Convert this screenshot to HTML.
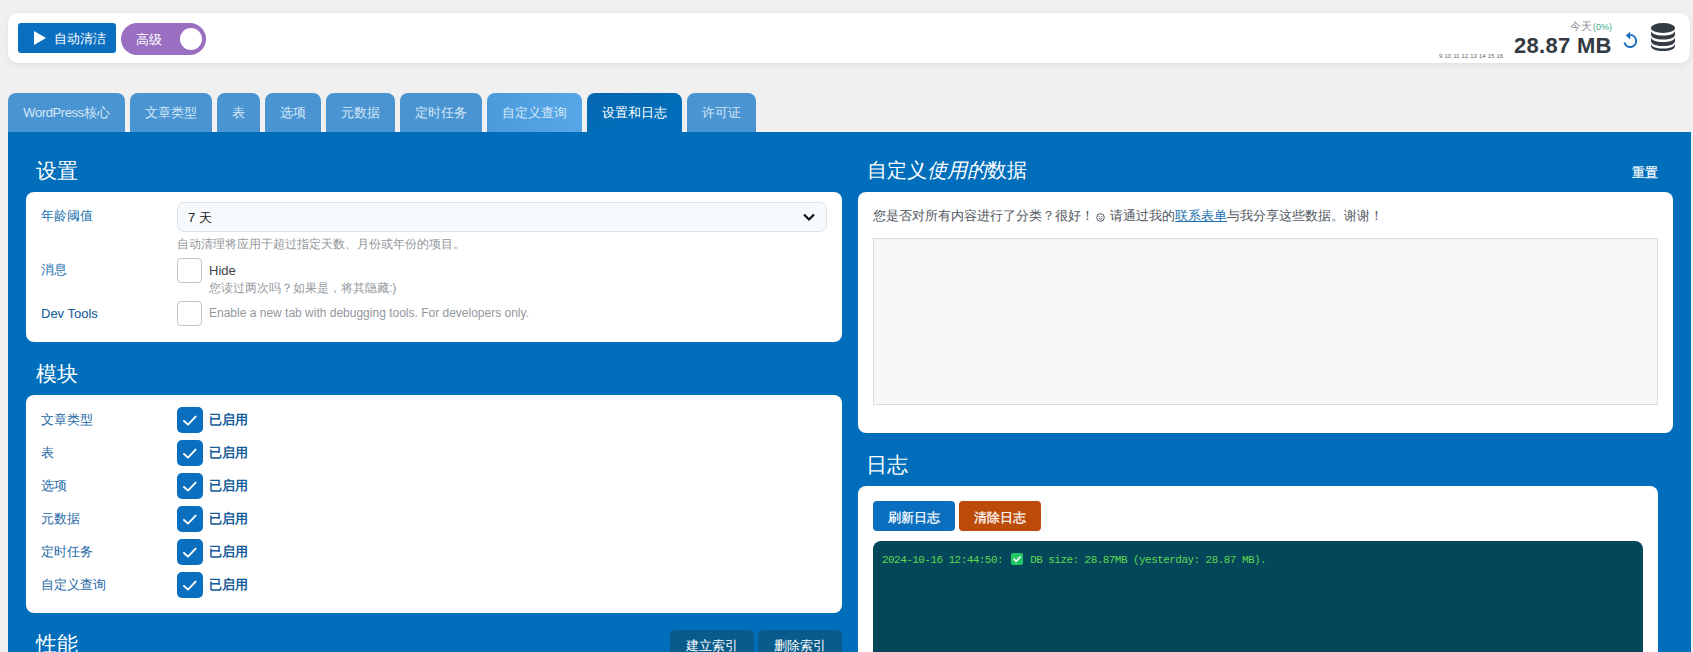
<!DOCTYPE html>
<html><head><meta charset="utf-8">
<style>
*{box-sizing:border-box;margin:0;padding:0}
html,body{width:1693px;height:652px;overflow:hidden;background:#f0f0f1;font-family:"Liberation Sans",sans-serif;font-size:13px;color:#3c434a}
.abs{position:absolute}
#hdr{left:8px;top:13px;width:1682px;height:50px;background:#fff;border-radius:10px;box-shadow:0 2px 6px rgba(0,0,0,.07)}
.btn-auto{left:18px;top:23px;width:98px;height:30px;background:#0a6fbf;border-radius:3px;color:#fff;font-size:13px}
.btn-auto .tri{position:absolute;left:16px;top:8px;width:0;height:0;border-left:12px solid #fff;border-top:7px solid transparent;border-bottom:7px solid transparent}
.btn-auto span{position:absolute;left:36px;top:7px;line-height:18px}
.tog{left:121px;top:23px;width:85px;height:32px;background:#9a6fc2;border-radius:16px;color:#fff}
.tog span{position:absolute;left:15px;top:8px;line-height:18px}
.tog .knob{position:absolute;left:59px;top:5px;width:22px;height:22px;border-radius:50%;background:#fff}
.tab{top:93px;height:39px;background:#4a94d2;color:#d4e8f8;border-radius:8px 8px 0 0;font-size:13px;line-height:40px;text-align:center}
.tab.act{background:linear-gradient(160deg,#0565ae,#006ebb 70%);color:#fff}
.tab.hov{background:linear-gradient(90deg,#4b9bdc,#57a7e8)}
#panel{left:8px;top:132px;width:1683px;height:520px;background:#006ebb}
.h2{color:#fff;font-size:20.5px;line-height:24px}
.card{background:#fff;border-radius:8px}
.lbl{color:#2271b1;font-size:13px;line-height:18px}
.cb{width:25px;height:25px;border:1px solid #c3c4c7;border-radius:4px;background:#fff}
.cbon{width:26px;height:26px;border-radius:5px;background:#0a6fbf}
.en{color:#155c9a;font-weight:bold;font-size:13px;line-height:18px}
.desc{color:#94979c;font-size:12px;line-height:16px}
.lbl2{color:#2468a6;font-size:13px;line-height:18px}
.pbtn{height:30px;background:#095b8b;border-radius:5px;color:#fff;text-align:center;line-height:32px;font-size:13px}
.lbtn{height:30px;border-radius:4px;color:#fff;text-align:center;line-height:33px;font-size:13px;-webkit-text-stroke:0.25px #fff}
.mono{font-family:"Liberation Mono",monospace;font-size:11px;letter-spacing:-0.55px;color:#5fd64e;line-height:14px;white-space:nowrap}
.emo{display:inline-block;width:12px;height:12px;background:#24c765;border-radius:2px;color:#fff;font-size:10px;line-height:12px;text-align:center;letter-spacing:0;vertical-align:-2px;margin:0 1px 0 2px;font-family:"Liberation Sans",sans-serif;font-weight:bold}
</style></head><body>
<div id="hdr" class="abs"></div>
<div class="abs btn-auto"><div class="tri"></div><span>自动清洁</span></div>
<div class="abs tog"><span>高级</span><div class="knob"></div></div>

<div class="abs" style="left:1439px;top:53px;font-size:6px;color:#666;letter-spacing:0px;word-spacing:0.4px;line-height:7px">9 10 11 12 13 14 15 16</div>
<div class="abs" style="left:1570px;top:19px;font-size:11px;line-height:14px;color:#8c8f94">今天<span style="color:#3aa88a;font-size:9px;margin-left:1px">(0%)</span></div>
<div class="abs" style="left:1514px;top:33px;font-size:22px;line-height:26px;font-weight:bold;color:#333a42;letter-spacing:0.3px">28.87 MB</div>

<svg class="abs" style="left:1621px;top:30px" width="18" height="20" viewBox="0 0 18 20"><path d="M9.3 5 A6 6 0 1 1 3.4 12.6" fill="none" stroke="#1a6dbd" stroke-width="2"/><path d="M9.2 1.8 L9.2 9.6 L4.8 5.6 Z" fill="#1a6dbd"/></svg>
<svg class="abs" style="left:1650px;top:22px" width="26" height="30" viewBox="0 0 26 30"><ellipse cx="13" cy="6" rx="12" ry="5" fill="#343b43"/><path d="M1 8.5 C1 11.5 6 13.5 13 13.5 C20 13.5 25 11.5 25 8.5 L25 12.5 C25 15.5 20 17.5 13 17.5 C6 17.5 1 15.5 1 12.5 Z" fill="#343b43"/><path d="M1 15 C1 18 6 20 13 20 C20 20 25 18 25 15 L25 19 C25 22 20 24 13 24 C6 24 1 22 1 19 Z" fill="#343b43"/><path d="M1 21.5 C1 24.5 6 26.5 13 26.5 C20 26.5 25 24.5 25 21.5 L25 24 C25 27 20 29 13 29 C6 29 1 27 1 24 Z" fill="#343b43"/></svg>
<div class="abs tab" style="left:8px;width:117px"><span style="letter-spacing:-0.4px">WordPress</span>核心</div>
<div class="abs tab" style="left:130px;width:82px">文章类型</div>
<div class="abs tab" style="left:217px;width:43px">表</div>
<div class="abs tab" style="left:265px;width:56px">选项</div>
<div class="abs tab" style="left:326px;width:69px">元数据</div>
<div class="abs tab" style="left:400px;width:82px">定时任务</div>
<div class="abs tab hov" style="left:487px;width:95px">自定义查询</div>
<div class="abs tab act" style="left:587px;width:95px">设置和日志</div>
<div class="abs tab" style="left:687px;width:69px">许可证</div>

<div id="panel" class="abs"></div>
<div class="abs h2" style="left:36px;top:159px">设置</div>
<div class="abs card" style="left:26px;top:192px;width:816px;height:150px"></div>
<div class="abs lbl" style="left:41px;top:207px">年龄阈值</div>
<div class="abs" style="left:177px;top:202px;width:650px;height:30px;border:1px solid #e0e2e4;border-radius:7px;background:#f7fafd"></div>
<div class="abs" style="left:188px;top:209px;color:#1d2327;line-height:18px">7 天</div>
<svg class="abs" style="left:802px;top:212px" width="14" height="10" viewBox="0 0 14 10"><path d="M2 2.5 L7 7.5 L12 2.5" fill="none" stroke="#111" stroke-width="2.2"/></svg>
<div class="abs desc" style="left:177px;top:236px">自动清理将应用于超过指定天数、月份或年份的项目。</div>
<div class="abs lbl" style="left:41px;top:261px">消息</div>
<div class="abs cb" style="left:177px;top:258px"></div>
<div class="abs" style="left:209px;top:263px;color:#3c434a;line-height:16px">Hide</div>
<div class="abs desc" style="left:209px;top:280px">您读过两次吗？如果是，将其隐藏:)</div>
<div class="abs lbl" style="left:41px;top:305px;color:#1f649c;-webkit-text-stroke:0.15px #1f649c">Dev Tools</div>
<div class="abs cb" style="left:177px;top:301px"></div>
<div class="abs desc" style="left:209px;top:305px">Enable a new tab with debugging tools. For developers only.</div>

<div class="abs h2" style="left:36px;top:362px">模块</div>
<div class="abs card" style="left:26px;top:395px;width:816px;height:218px"></div>

<div class="abs lbl2" style="left:41px;top:411px">文章类型</div>
<div class="abs cbon" style="left:177px;top:407px"><svg width="26" height="26" viewBox="0 0 26 26"><path d="M7 14 L11 17.6 L18.6 9.6" fill="none" stroke="#fff" stroke-width="1.9" stroke-linecap="round" stroke-linejoin="round"/></svg></div>
<div class="abs en" style="left:209px;top:411px">已启用</div>
<div class="abs lbl2" style="left:41px;top:444px">表</div>
<div class="abs cbon" style="left:177px;top:440px"><svg width="26" height="26" viewBox="0 0 26 26"><path d="M7 14 L11 17.6 L18.6 9.6" fill="none" stroke="#fff" stroke-width="1.9" stroke-linecap="round" stroke-linejoin="round"/></svg></div>
<div class="abs en" style="left:209px;top:444px">已启用</div>
<div class="abs lbl2" style="left:41px;top:477px">选项</div>
<div class="abs cbon" style="left:177px;top:473px"><svg width="26" height="26" viewBox="0 0 26 26"><path d="M7 14 L11 17.6 L18.6 9.6" fill="none" stroke="#fff" stroke-width="1.9" stroke-linecap="round" stroke-linejoin="round"/></svg></div>
<div class="abs en" style="left:209px;top:477px">已启用</div>
<div class="abs lbl2" style="left:41px;top:510px">元数据</div>
<div class="abs cbon" style="left:177px;top:506px"><svg width="26" height="26" viewBox="0 0 26 26"><path d="M7 14 L11 17.6 L18.6 9.6" fill="none" stroke="#fff" stroke-width="1.9" stroke-linecap="round" stroke-linejoin="round"/></svg></div>
<div class="abs en" style="left:209px;top:510px">已启用</div>
<div class="abs lbl2" style="left:41px;top:543px">定时任务</div>
<div class="abs cbon" style="left:177px;top:539px"><svg width="26" height="26" viewBox="0 0 26 26"><path d="M7 14 L11 17.6 L18.6 9.6" fill="none" stroke="#fff" stroke-width="1.9" stroke-linecap="round" stroke-linejoin="round"/></svg></div>
<div class="abs en" style="left:209px;top:543px">已启用</div>
<div class="abs lbl2" style="left:41px;top:576px">自定义查询</div>
<div class="abs cbon" style="left:177px;top:572px"><svg width="26" height="26" viewBox="0 0 26 26"><path d="M7 14 L11 17.6 L18.6 9.6" fill="none" stroke="#fff" stroke-width="1.9" stroke-linecap="round" stroke-linejoin="round"/></svg></div>
<div class="abs en" style="left:209px;top:576px">已启用</div>

<div class="abs h2" style="left:36px;top:632px">性能</div>
<div class="abs pbtn" style="left:670px;top:630px;width:84px">建立索引</div>
<div class="abs pbtn" style="left:758px;top:630px;width:84px">删除索引</div>


<div class="abs h2" style="left:867px;top:158px;font-size:20px">自定义<i>使用的</i>数据</div>
<div class="abs" style="left:1632px;top:164px;color:#fff;font-size:13px;line-height:18px;-webkit-text-stroke:0.25px #fff">重置</div>
<div class="abs card" style="left:858px;top:192px;width:815px;height:241px"></div>
<div class="abs" style="left:873px;top:207px;color:#50575e;line-height:18px;white-space:nowrap">您是否对所有内容进行了分类？很好！ <svg width="9" height="9" viewBox="0 0 9 9" style="vertical-align:-2px;margin-left:-2px;margin-right:2px"><circle cx="4.5" cy="4.5" r="3.8" fill="none" stroke="#50575e" stroke-width="1"/><path d="M2.7 5.3 Q4.5 7 6.3 5.3" fill="none" stroke="#50575e" stroke-width="0.9"/><circle cx="3.2" cy="3.5" r="0.6" fill="#50575e"/><circle cx="5.8" cy="3.5" r="0.6" fill="#50575e"/></svg> 请通过我的<span style="color:#2271b1;text-decoration:underline">联系表单</span>与我分享这些数据。谢谢！</div>
<div class="abs" style="left:873px;top:238px;width:785px;height:167px;border:1px solid #dcdcde;background:#f6f7f7"></div>

<div class="abs h2" style="left:866px;top:453px">日志</div>
<div class="abs card" style="left:858px;top:486px;width:800px;height:180px"></div>
<div class="abs lbtn" style="left:873px;top:501px;width:82px;background:#0a6fbf">刷新日志</div>
<div class="abs lbtn" style="left:959px;top:501px;width:82px;background:#bc4a09">清除日志</div>
<div class="abs" style="left:873px;top:541px;width:770px;height:130px;background:#04475b;border-radius:8px"></div>
<div class="abs mono" style="left:882px;top:553px">2024-10-16 12:44:50: <span class="emo"><svg width="12" height="12" viewBox="0 0 12 12" style="display:block"><path d="M3 6.2 L5.2 8.3 L9.2 4" fill="none" stroke="#fff" stroke-width="1.6" stroke-linecap="round" stroke-linejoin="round"/></svg></span> DB size: 28.87MB (yesterday: 28.87 MB).</div>
</body></html>
